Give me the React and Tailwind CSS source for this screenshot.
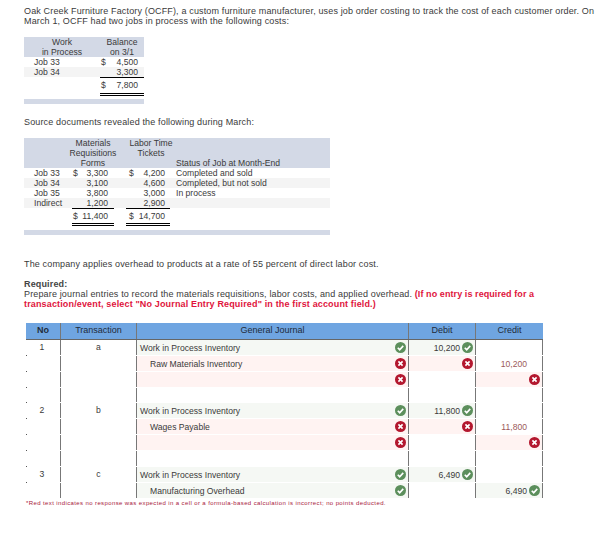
import React from "react";

const Check = () => (
  <svg viewBox="0 0 20 20" className="w-[11px] h-[11px] shrink-0">
    <circle cx="10" cy="10" r="10" fill="#5c8f5c" />
    <path d="M5 10.5l3.5 3.5L15 7" fill="none" stroke="#fff" strokeWidth="3" />
  </svg>
);
const Cross = () => (
  <svg viewBox="0 0 20 20" className="w-[11px] h-[11px] shrink-0">
    <circle cx="10" cy="10" r="10" fill="#b3172e" />
    <path d="M6.2 6.2l7.6 7.6M13.8 6.2l-7.6 7.6" fill="none" stroke="#fff" strokeWidth="3" />
  </svg>
);

const G = "bg-[#f5f8f4]";
const R = "bg-[#fff3f2]";

const rows = [
  { h: "h-[15px]", no: "1", tr: "a", acct: "Work in Process Inventory", jm: "c", d: "10,200", dm: "c", dbg: G },
  { h: "h-[15px]", acct: "Raw Materials Inventory", indent: true, jm: "x", dm: "x", dbg: R, c: "10,200", cred: true },
  { h: "h-[15px]", jm: "x", jbg: R, cm: "x", cbg: R },
  { h: "h-[14px]", jbg: "bg-white" },
  { h: "h-[15px]", no: "2", tr: "b", acct: "Work in Process Inventory", jm: "c", d: "11,800", dm: "c", dbg: G },
  { h: "h-[15px]", acct: "Wages Payable", indent: true, jm: "x", dm: "x", dbg: R, c: "11,800", cred: true },
  { h: "h-[15px]", jm: "x", jbg: R, cm: "x", cbg: R },
  { h: "h-[15px]", jbg: "bg-white" },
  { h: "h-[15px]", no: "3", tr: "c", acct: "Work in Process Inventory", jm: "c", d: "6,490", dm: "c", dbg: G },
  { h: "h-[15px]", acct: "Manufacturing Overhead", indent: true, jm: "c", c: "6,490", cm: "c", cbg: G, last: true },
];

const Mark = ({ m }) => (m === "c" ? <Check /> : m === "x" ? <Cross /> : null);

function JournalRow({ r }) {
  const jbg = r.jbg || (r.jm === "x" ? R : r.jm === "c" ? G : "");
  return (
    <div className={`flex ${r.last ? "" : "mb-px"} ${r.h}`}>
      <div className="relative w-[35px] border-r border-[#777] text-center pr-[2px] leading-[14px]">
        {r.no}
        {!r.last && <span className="absolute left-0 -bottom-px w-px h-px bg-[#555]" />}
      </div>
      <div className="w-[76px] border-r border-[#777] text-center leading-[14px]">{r.tr}</div>
      <div className={`w-[272px] border-r border-[#777] flex items-center justify-between pr-[2px] ${r.indent ? "pl-[13px]" : "pl-[3px]"} ${jbg}`}>
        <span>{r.acct}</span>
        <Mark m={r.jm} />
      </div>
      <div className={`w-[67px] border-r border-[#777] flex items-center justify-end gap-[2px] pr-[2px] ${r.dbg || ""}`}>
        {r.d && <span>{r.d}</span>}
        <Mark m={r.dm} />
      </div>
      <div className={`w-[67px] border-r border-[#777] flex items-center justify-end gap-[2px] pr-[2px] ${r.cbg || ""}`}>
        {r.c && <span className={r.cred ? "text-[#9c5a5a] pr-[13px]" : ""}>{r.c}</span>}
        <Mark m={r.cm} />
      </div>
    </div>
  );
}

const Double = ({ className }) => (
  <div className={`border-b-[3px] border-double border-black ${className}`} />
);

export default function App() {
  return (
    <div className="w-[602px] h-[534px] overflow-hidden bg-white text-[#3a3a3a] font-['Liberation_Sans',sans-serif] text-[9px] leading-[10px] pt-[6px]">
      <p className="ml-[24px] whitespace-nowrap tracking-[0.15px]">
        Oak Creek Furniture Factory (OCFF), a custom furniture manufacturer, uses job order costing to track the cost of each customer order. On
        <br />
        March 1, OCFF had two jobs in process with the following costs:
      </p>

      <div className="ml-[24px] mt-[11px] w-[120px] text-[8.6px]">
        <div className="bg-[#d3d9e6] flex h-[20px] text-center">
          <div className="w-[76px]">Work<br />in Process</div>
          <div className="w-[44px]">Balance<br />on 3/1</div>
        </div>
        <div className="flex h-[10px]">
          <div className="w-[76px] pl-[10px]">Job 33</div>
          <div className="w-[38px] flex justify-between pl-[1px]"><span>$</span><span>4,500</span></div>
        </div>
        <div className="flex h-[10px] bg-[#f4f4f4]">
          <div className="w-[76px] pl-[10px]">Job 34</div>
          <div className="w-[38px] text-right">3,300</div>
        </div>
        <div className="flex">
          <div className="ml-[76px] w-[44px] border-t border-black pt-[2px]">
            <div className="flex justify-between pl-px pr-[6px] h-[11px]"><span>$</span><span>7,800</span></div>
            <Double className="mt-[2px]" />
          </div>
        </div>
        <div className="h-[5px] bg-[#d3d9e6] mt-[3px]" />
      </div>

      <p className="ml-[24px] mt-[13px] tracking-[0.15px]">Source documents revealed the following during March:</p>

      <div className="ml-[24px] mt-[11px] w-[306px] text-[8.6px]">
        <div className="bg-[#d3d9e6] flex h-[30px]">
          <div className="ml-[45px] w-[48px] text-center whitespace-nowrap">Materials<br />Requisitions<br />Forms</div>
          <div className="ml-[10px] w-[48px] text-center whitespace-nowrap">Labor Time<br />Tickets</div>
          <div className="ml-[1px] pt-[20px]">Status of Job at Month-End</div>
        </div>
        {[
          ["Job 33", "$", "3,300", "$", "4,200", "Completed and sold", ""],
          ["Job 34", "", "3,100", "", "4,600", "Completed, but not sold", "bg-[#f4f4f4]"],
          ["Job 35", "", "3,800", "", "3,000", "In process", ""],
          ["Indirect", "", "1,200", "", "2,900", "", "bg-[#f4f4f4]"],
        ].map((r) => (
          <div key={r[0]} className={`flex h-[10px] ${r[6]}`}>
            <div className="w-[49px] pl-[10px]">{r[0]}</div>
            <div className="w-[35px] flex justify-between"><span>{r[1]}</span><span>{r[2]}</span></div>
            <div className="ml-[21px] w-[36px] flex justify-between"><span>{r[3]}</span><span>{r[4]}</span></div>
            <div className="ml-[11px]">{r[5]}</div>
          </div>
        ))}
        <div className="flex">
          <div className="ml-[48px] w-[42px] border-t border-black pt-[2px]">
            <div className="flex justify-between pl-px pr-[6px] h-[11px]"><span>$</span><span>11,400</span></div>
            <Double className="mt-[1px]" />
          </div>
          <div className="ml-[12px] w-[44px] border-t border-black pt-[2px]">
            <div className="flex justify-between pl-[3px] pr-[5px] h-[11px]"><span>$</span><span>14,700</span></div>
            <Double className="mt-[1px]" />
          </div>
        </div>
        <div className="h-[5px] bg-[#d3d9e6] mt-[4px]" />
      </div>

      <p className="ml-[24px] mt-[24px] tracking-[0.15px]">The company applies overhead to products at a rate of 55 percent of direct labor cost.</p>
      <p className="ml-[24px] mt-[10px] tracking-[0.15px] whitespace-nowrap">
        <span className="font-bold text-[#444]">Required:</span>
        <br />
        Prepare journal entries to record the materials requisitions, labor costs, and applied overhead.{" "}
        <span className="font-bold text-[#e0143c]">
          <span className="tracking-[0.08px]">(If no entry is required for a</span>
          <br />
          transaction/event, select "No Journal Entry Required" in the first account field.)
        </span>
      </p>

      <div className="ml-[26px] mt-[14px] w-[517px] text-[8.6px]">
        <div className="flex h-[17px] bg-[#6fa5e1] border-b border-[#666] text-[#1f2b3a] text-[9px] text-center leading-[15px]">
          <div className="w-[35px] border-r border-[#777] font-bold">No</div>
          <div className="w-[76px] border-r border-[#777]">Transaction</div>
          <div className="w-[272px] border-r border-[#777]">General Journal</div>
          <div className="w-[67px] border-r border-[#777]">Debit</div>
          <div className="w-[67px]">Credit</div>
        </div>
        {rows.map((r, i) => (
          <JournalRow key={i} r={r} />
        ))}
      </div>
      <p className="ml-[26px] mt-[1px] text-[6px] leading-[8px] tracking-[0.39px] text-[#a8203c] whitespace-nowrap">
        *Red text indicates no response was expected in a cell or a formula-based calculation is incorrect; no points deducted.
      </p>
    </div>
  );
}
